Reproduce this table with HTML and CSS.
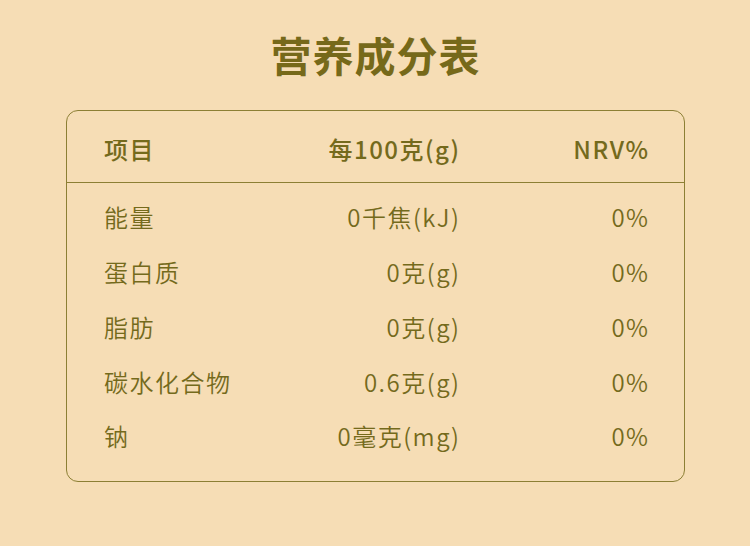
FILE: index.html
```html
<!DOCTYPE html>
<html lang="zh-CN">
<head>
<meta charset="utf-8">
<link rel="stylesheet" href="styles.css">
</head>
<body>
<h1 class="title">营养成分表</h1>
<div class="panel">
  <div class="row head">
    <div class="c1">项目</div>
    <div class="c2">每100克(g)</div>
    <div class="c3">NRV%</div>
  </div>
  <div class="body">
    <div class="row"><div class="c1">能量</div><div class="c2">0千焦(kJ)</div><div class="c3">0%</div></div>
    <div class="row"><div class="c1">蛋白质</div><div class="c2">0克(g)</div><div class="c3">0%</div></div>
    <div class="row"><div class="c1">脂肪</div><div class="c2">0克(g)</div><div class="c3">0%</div></div>
    <div class="row"><div class="c1">碳水化合物</div><div class="c2">0.6克(g)</div><div class="c3">0%</div></div>
    <div class="row"><div class="c1">钠</div><div class="c2">0毫克(mg)</div><div class="c3">0%</div></div>
  </div>
</div>
</body>
</html>
```
FILE: styles.css
```css
html, body {
  margin: 0;
  padding: 0;
}
body {
  width: 750px;
  height: 546px;
  background: #f6ddb5;
  font-family: "Noto Sans CJK SC", "Noto Sans", sans-serif;
  color: #746a1c;
  overflow: hidden;
}
.title {
  margin: 30px 0 0;
  height: 48px;
  line-height: 48px;
  font-size: 41px;
  font-weight: 700;
  text-align: center;
  color: #76691a;
  letter-spacing: 1px;
  text-indent: 1px;
}
.panel {
  margin: 32px 0 0 66px;
  width: 617px;
  border: 1px solid #8c7f34;
  border-radius: 12px;
}
.row {
  display: grid;
  grid-template-columns: 1fr 200px 189px;
  padding: 0 34.5px 0 37px;
  align-items: center;
  font-size: 24px;
  line-height: 34px;
  letter-spacing: 1.5px;
}
.head {
  padding-top: 21px;
  padding-bottom: 16px;
  border-bottom: 1px solid #8c7f34;
  font-weight: 500;
}
.body {
  padding: 7px 0 17px;
}
.body .row {
  height: 54.75px;
  font-weight: 350;
}
.c2, .c3 {
  text-align: right;
}
```
